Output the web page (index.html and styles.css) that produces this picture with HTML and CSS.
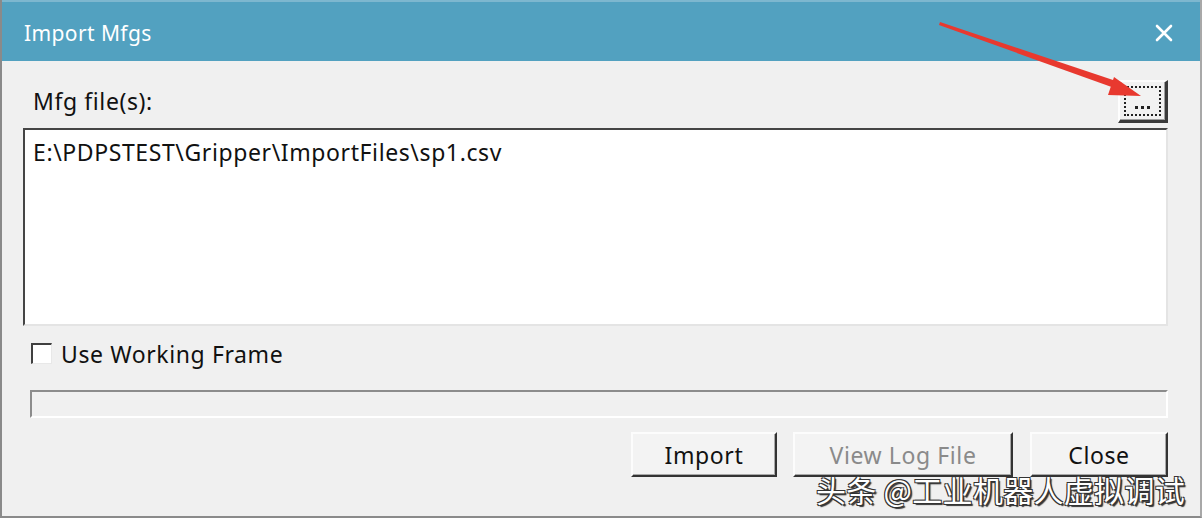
FILE: index.html
```html
<!DOCTYPE html>
<html>
<head>
<meta charset="utf-8">
<link rel="stylesheet" href="styles.css">
</head>
<body>
<div class="window">
  <div class="titlebar">
    <span class="title">Import Mfgs</span>
    <svg class="close-x" width="20" height="20" viewBox="0 0 20 20"><path d="M3 3 L17 17 M17 3 L3 17" stroke="#fff" stroke-width="2.6" stroke-linecap="round"/></svg>
  </div>
  <div class="content">
    <div class="label-row">
      <span class="label">Mfg file(s):</span>
      <div class="browse"><div class="focus"><span class="dots"><i></i><i></i><i></i></span></div></div>
    </div>
    <div class="listbox">E:\PDPSTEST\Gripper\ImportFiles\sp1.csv</div>
    <div class="check-row">
      <span class="checkbox"></span>
      <span class="check-label">Use Working Frame</span>
    </div>
    <div class="progress"></div>
    <div class="buttons">
      <div class="btn btn-import">Import</div>
      <div class="btn btn-log disabled">View Log File</div>
      <div class="btn btn-close">Close</div>
    </div>
  </div>
  <div class="watermark">头条 @工业机器人虚拟调试</div>
  <svg class="arrow" width="1202" height="518" viewBox="0 0 1202 518">
    <polygon points="940,22 1122,83 1120,90 939,25" fill="#e8392f"/>
    <polygon points="1141,96 1114,77 1108,95" fill="#e8392f"/>
  </svg>
</div>
</body>
</html>
```
FILE: styles.css
```css
* { box-sizing: border-box; }
html, body { margin: 0; padding: 0; }
body { width: 1202px; height: 518px; overflow: hidden; background: #f0f0f0; font-family: "Noto Sans", "Open Sans", sans-serif; }
.window { position: relative; width: 1202px; height: 518px; background: #f0f0f0; border-left: 2px solid #8a8a8a; border-right: 2px solid #a8a8a8; border-bottom: 2px solid #8a8a8a; display: flex; flex-direction: column; }
.titlebar { height: 61px; background: #52a1c0; border-top: 2px solid #7db7cf; display: flex; align-items: center; justify-content: space-between; padding: 3px 22px 0 22px; flex: none; }
.title { color: #fff; font-size: 21px; letter-spacing: 0.4px; }
.close-x { margin-right: 4px; }
.content { display: flex; flex-direction: column; padding: 0 32px 0 21px; }
.label-row { display: flex; justify-content: space-between; align-items: flex-start; margin-top: 19px; height: 43px; }
.label { font-size: 23px; letter-spacing: 0.6px; color: #111; padding-left: 10px; margin-top: 7px; line-height: 28px; }
.browse { width: 50px; height: 43px; background: #f2f2f2; border-top: 2px solid #fdfdfd; border-left: 2px solid #fdfdfd; border-right: 3px solid #3a3a3a; border-bottom: 3px solid #3a3a3a; box-shadow: inset -1px -1px 0 #a0a0a0; padding: 4px 4px 4px 4px; }
.focus { width: 100%; height: 100%; border: 2px dotted #222; display: flex; align-items: flex-end; justify-content: center; padding-bottom: 5px; }
.dots { display: flex; gap: 3px; }
.dots i { width: 3px; height: 3px; background: #222; display: block; }
.listbox { margin-top: 5px; height: 198px; background: #fff; border-top: 2px solid #454545; border-left: 2px solid #454545; border-right: 2px solid #e4e4e4; border-bottom: 2px solid #e4e4e4; font-size: 23px; letter-spacing: 0.6px; color: #111; padding: 8px 0 0 8px; line-height: 28px; }
.check-row { display: flex; align-items: center; margin-top: 17px; height: 21px; padding-left: 8px; }
.checkbox { width: 21px; height: 21px; background: #fff; border-top: 2px solid #404040; border-left: 2px solid #404040; border-right: 1px solid #e8e8e8; border-bottom: 1px solid #e8e8e8; flex: none; }
.check-label { font-size: 23px; letter-spacing: 0.6px; color: #111; margin-left: 9px; line-height: 28px; }
.progress { margin-top: 26px; margin-left: 7px; height: 28px; background: #f0f0f0; border-top: 2px solid #8c8c8c; border-left: 2px solid #8c8c8c; border-right: 2px solid #fff; border-bottom: 2px solid #fff; }
.buttons { display: flex; justify-content: flex-end; margin-top: 14px; gap: 16px; }
.btn { height: 45px; background: #f3f3f3; border-top: 2px solid #fcfcfc; border-left: 2px solid #fcfcfc; border-right: 2px solid #333; border-bottom: 2px solid #333; box-shadow: inset -1px -1px 0 #a9a9a9; display: flex; align-items: center; justify-content: center; font-size: 23px; letter-spacing: 0.6px; color: #111; }
.btn-import { width: 146px; }
.btn-log { width: 220px; }
.btn-close { width: 138px; margin-left: 1px; }
.disabled { color: #8a8a8a; }
.watermark { position: absolute; left: 814px; top: 471px; font-family: "Noto Sans CJK SC", sans-serif; font-size: 30px; color: #fff; text-shadow: 1px 1px 0 #333, -1px -1px 0 #333, 1px -1px 0 #333, -1px 1px 0 #333, 2px 2px 1px #333; letter-spacing: 0.3px; line-height: 36px; }
.arrow { position: absolute; left: -2px; top: 0; pointer-events: none; }
```
